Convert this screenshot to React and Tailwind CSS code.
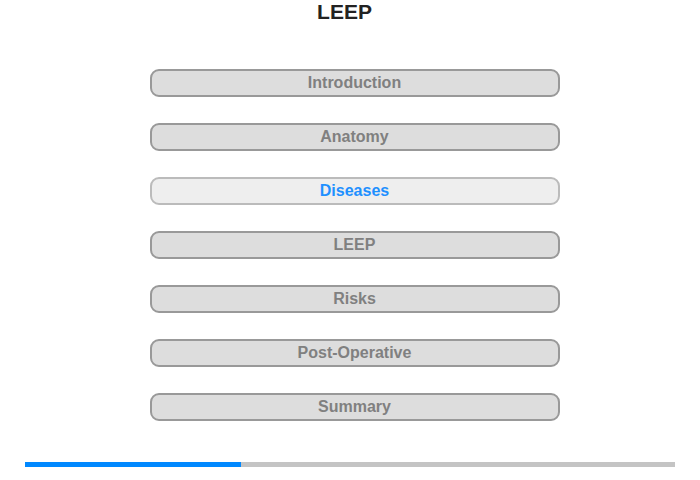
import React from 'react';

const sections = ['Introduction', 'Anatomy', 'Diseases', 'LEEP', 'Risks', 'Post-Operative', 'Summary'];

const App = () => {
  const active = 'Diseases';
  const progress = 216 / 650;

  return (
    <div className="w-[700px] h-[480px] bg-white flex flex-col font-['Liberation_Sans',Arial,sans-serif]">
      {/* Title */}
      <div className="h-[24px] leading-[24px] text-[21px] font-bold text-[#222222] text-center pr-[11px]">
        LEEP
      </div>

      {/* Chapter menu */}
      <div className="mt-[45px] flex flex-col items-center gap-[26px] pl-[9px]">
        {sections.map((name) => {
          const isActive = name === active;
          return (
            <button
              key={name}
              className={`w-[410px] h-[28px] rounded-[9px] border-2 text-[16px] font-bold leading-none ${
                isActive
                  ? 'bg-[#eeeeee] border-[#bbbbbb] text-[#1e90ff]'
                  : 'bg-[#dddddd] border-[#999999] text-[#808080]'
              }`}
            >
              {name}
            </button>
          );
        })}
      </div>

      {/* Progress bar */}
      <div className="mt-[41px] mx-[25px] h-[5px] bg-[#c4c4c4] flex">
        <div className="h-full bg-[#0088ff]" style={{ width: `${progress * 100}%` }} />
      </div>
    </div>
  );
};

export default App;
